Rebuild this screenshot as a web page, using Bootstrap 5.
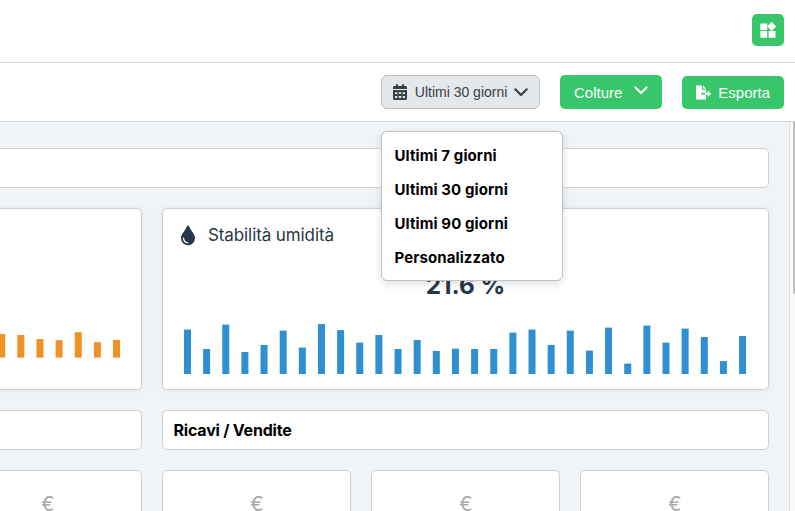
<!DOCTYPE html>
<html lang="it">
<head>
<meta charset="utf-8">
<meta name="viewport" content="width=device-width, initial-scale=1">
<title>Dashboard</title>
<link href="https://cdn.jsdelivr.net/npm/bootstrap@5.3.0/dist/css/bootstrap.min.css" rel="stylesheet">
<style>
body{font-family:Inter,sans-serif;color:#000;height:511px;line-height:1.2}
.topline{height:63px;border-bottom:1px solid #d6d6d6;padding-right:11px;padding-bottom:2px}
.tools{height:59px;border-bottom:1px solid #d6d6d6;padding-right:11px}
.tools .btn,.range{font-family:"Liberation Sans",Arial,sans-serif}
.btn-green{background:#38c66a;color:#fff;border:0;border-radius:5px;font-size:15px;line-height:18px;padding:0 14px}
.btn-green:hover{background:#2fb65e;color:#fff}
.app-btn{width:32px;height:32px;padding:0}
.crops{width:102px;height:34px;margin:0 20px}
.crops span{padding-top:2px}
.export{width:102px;height:33px;margin-top:1px}
.range-btn{width:159px;height:34px;background:#e4e8eb;border:1px solid #bfc1c3;border-radius:6px;color:#3a4045;font-size:14px;line-height:18px;padding:0 11px}
.range .dropdown-menu{top:56px;left:0;width:182px;height:150px;padding:7px 0;border:1px solid #c3c3c3;border-radius:6px;box-shadow:0 3px 9px rgba(0,0,0,.12);font-family:Inter,sans-serif}
.range .dropdown-item{height:34px;padding:0 12.5px;font-size:15px;font-weight:700;letter-spacing:.1px;line-height:34px;color:#000}
.canvas{background:#f0f4f7;width:789px;padding-top:26px}
.board{display:grid;grid-template-columns:repeat(6,189px);gap:20px;width:1234px;margin-left:-465px}
.panel{background:#fff;border:1px solid #cfd0d1;border-radius:5px}
.raised{box-shadow:0 0 5px rgba(0,0,0,.07)}
.all{grid-column:span 6}.half{grid-column:span 3}
.strip{height:40px;padding:1px 10.5px 0;font-size:16px;font-weight:700;letter-spacing:-.2px}
.metric{height:182px;color:#283747}
.metric-name{height:53px;padding:0 17px;font-size:17px;letter-spacing:-.1px}
.metric-value{height:46px;font-size:24.4px;font-weight:700;line-height:47px}
.tile{height:189px;padding:21px 0 0 1px;color:#a9a9a9;font-size:20px;line-height:24px}
.track{width:6px;background:#fafafa;border-left:1px solid #dedfe1}
.thumb{width:2px;height:172px;background:#bfbfbf;border-radius:0 0 0 2px}
</style>
</head>
<body class="overflow-hidden d-flex flex-column bg-white">
<header class="topline flex-shrink-0 d-flex align-items-center justify-content-end">
  <button class="btn btn-green app-btn d-flex align-items-center justify-content-center" aria-label="App">
    <svg width="18" height="18" viewBox="0 0 18 18" fill="#fff"><path d="M1.3 2.4h6.900v6.500H1.300zM1.300 9.900h6.900v6.800H1.300zM9.600 9.900h6.900v6.800H9.600zM12.600.8l4.600 4.600-4.600 4.600L8.200 5.400z"/></svg>
  </button>
</header>
<nav class="tools flex-shrink-0 d-flex align-items-center justify-content-end">
  <div class="dropdown range">
    <button class="btn range-btn d-flex align-items-center" type="button" data-bs-toggle="dropdown" aria-expanded="true">
      <svg class="flex-shrink-0" width="14" height="16" viewBox="0 0 448 512" fill="currentColor"><path d="M128 0c17.700 0 32 14.300 32 32v32h128V32c0-17.700 14.300-32 32-32s32 14.300 32 32v32h48c26.500 0 48 21.500 48 48v48H0v-48c0-26.500 21.500-48 48-48h48V32c0-17.700 14.300-32 32-32z"/><path fill-rule="evenodd" d="M0 192h448v272c0 26.500-21.500 48-48 48H48c-26.500 0-48-21.500-48-48zm64 72v56h72v-56zm120 0v56h80v-56zm128 0v56h72v-56zM64 384v64h72v-64zm120 0v64h80v-64zm128 0v64h72v-64z"/></svg>
      <span class="text-nowrap">&nbsp;&nbsp;Ultimi 30 giorni</span>
      <svg class="ms-auto flex-shrink-0" width="14" height="9" viewBox="0 0 14 9" fill="none" stroke="currentColor" stroke-width="2.2" stroke-linecap="round" stroke-linejoin="round"><path d="M1.3 1.300 7 7l5.700-5.700"/></svg>
    </button>
    <ul class="dropdown-menu show">
      <li><a class="dropdown-item" href="#">Ultimi 7 giorni</a></li>
      <li><a class="dropdown-item" href="#">Ultimi 30 giorni</a></li>
      <li><a class="dropdown-item" href="#">Ultimi 90 giorni</a></li>
      <li><a class="dropdown-item" href="#">Personalizzato</a></li>
    </ul>
  </div>
  <button class="btn btn-green crops d-flex align-items-center justify-content-between">
    <span>Colture</span>
    <svg class="mb-1" width="14" height="9" viewBox="0 0 14 9" fill="none" stroke="#fff" stroke-width="2.2" stroke-linecap="round" stroke-linejoin="round"><path d="M1.500 1.500 7 7l5.500-5.500"/></svg>
  </button>
  <button class="btn btn-green export d-flex align-items-center justify-content-between">
    <svg width="16" height="15" viewBox="0 0 16 15"><path fill="#fff" d="M0 .5h6v4.200h4v3H5.200v1.700H10v5.100H0zM7 .5 10 3.700H7zM11.600 5.600l3.600 3.100-3.600 3.200z"/><path fill="#fff" d="M9 7.700h3v1.700H9z"/></svg>
    <span>Esporta</span>
  </button>
</nav>
<div class="flex-grow-1 d-flex overflow-hidden">
  <main class="canvas flex-shrink-0 overflow-hidden">
    <div class="board">
      <section class="panel strip all"></section>
      <section class="panel raised metric half d-flex flex-column">
        <svg class="mt-auto" width="605" height="66" fill="#f09128" id="heat"></svg>
      </section>
      <section class="panel raised metric half d-flex flex-column">
        <div class="metric-name d-flex align-items-center">
          <svg class="me-2" width="16" height="21" viewBox="0 0 16 21"><path fill="#283747" d="M8 .5c.5 0 .8.300 1 .8 1.600 4.500 6 7.200 6 12A7 7 0 0 1 1 13.300C1 8.500 5.400 5.800 7 1.300c.2-.5.5-.8 1-.8z"/><path d="M3.500 13.200c.2 2.700 1.800 4.300 4.400 4.600" fill="none" stroke="#fff" stroke-width="1.300" stroke-linecap="round"/></svg>
          <span class="ps-1">Stabilità umidità</span>
        </div>
        <div class="metric-value text-center">21.6 %</div>
        <svg class="mt-auto" width="605" height="66" fill="#2e8fd3" id="humidity"></svg>
      </section>
      <section class="panel strip half"></section>
      <section class="panel strip half d-flex align-items-center">Ricavi / Vendite</section>
      <section class="panel tile text-center"></section>
      <section class="panel tile text-center"></section>
      <section class="panel tile text-center">€</section>
      <section class="panel tile text-center">€</section>
      <section class="panel tile text-center">€</section>
      <section class="panel tile text-center">€</section>
    </div>
  </main>
  <div class="track d-flex justify-content-end"><div class="thumb"></div></div>
</div>
<script src="https://cdn.jsdelivr.net/npm/bootstrap@5.3.0/dist/js/bootstrap.bundle.min.js"></script>
<script>
function drawBars(id, first, base, values) {
  const svg = document.getElementById(id);
  values.forEach((v, i) => {
    const r = document.createElementNS('http://www.w3.org/2000/svg', 'rect');
    r.setAttribute('x', first + i * 19.14);
    r.setAttribute('y', base - v);
    r.setAttribute('width', 7);
    r.setAttribute('height', v);
    svg.appendChild(r);
  });
}
drawBars('humidity', 21, 51, [44.4,25,49.4,22,29,43.4,26.4,50,43.9,31.4,39,25,34,23,25.4,25,25,41.4,44.4,29,43.4,23.4,46.4,10.4,48.4,31.4,45.4,37,12.9,38]);
drawBars('heat', 462.2, 34.6, [23.6,22.6,18.6,17.4,25.4,15.4,17.6]);
</script>
</body>
</html>
